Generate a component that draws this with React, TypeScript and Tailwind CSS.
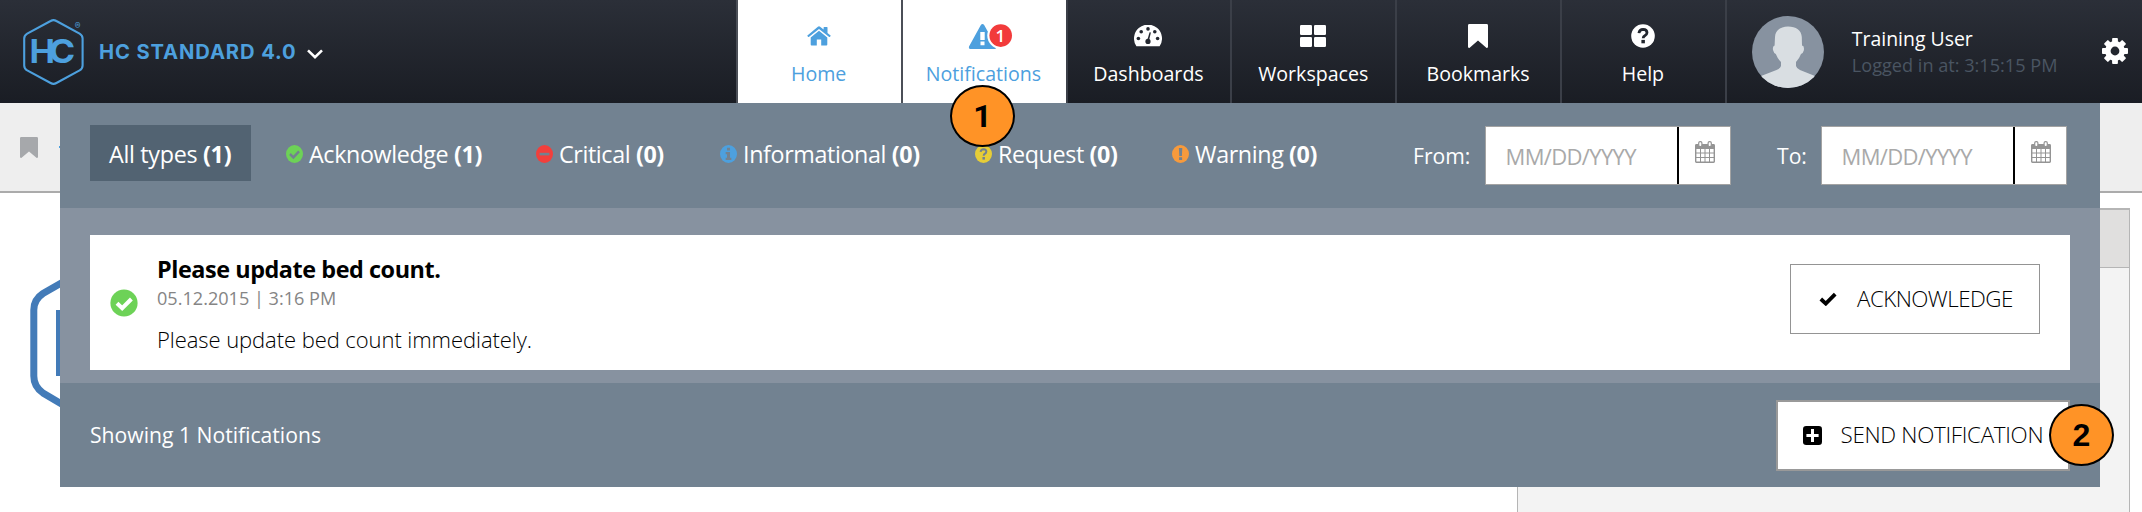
import type { ReactNode } from "react";

function HcLogo() {
  return (
    <svg width="64" height="70" viewBox="22 16 64 70" fill="#4da0de" aria-label="HC">
      <path
        d="M50.6 20 Q53.5 18.3 56.4 20 L79.6 32.6 Q82.6 34.4 82.6 37.6 V64.4 Q82.6 67.6 79.6 69.4 L56.4 82 Q53.5 83.7 50.6 82 L27.2 69.4 Q24.2 67.6 24.2 64.4 V37.6 Q24.2 34.4 27.2 32.6 Z"
        fill="none"
        stroke="#4da0de"
        strokeWidth="2.1"
      />
      <text x="29.4" y="62.4" fontFamily="Inter, sans-serif" fontWeight="750" fontSize="33" textLength="25.5" lengthAdjust="spacingAndGlyphs">H</text>
      <text x="48.8" y="62.4" fontFamily="Inter, sans-serif" fontWeight="750" fontSize="33" textLength="26.5" lengthAdjust="spacingAndGlyphs">C</text>
      <text x="74.8" y="28" fontFamily="Inter, sans-serif" fontSize="8.6">®</text>
    </svg>
  );
}

function HomeIcon() {
  return (
    <svg width="24" height="20" viewBox="0 0 24 20" fill="#4da0de">
      <path d="M12 4.8 L20.3 11.6 V18.5 a.9.9 0 0 1-.9.9 H14.2 V13.4 H9.8 V19.4 H4.6 a.9.9 0 0 1-.9-.9 V11.6 Z" />
      <path d="M10.9.8 a1.7 1.7 0 0 1 2.2 0 L16.6 3.6 V1.4 a.5.5 0 0 1 .5-.5 H20 a.5.5 0 0 1 .5.5 V6.9 L23.6 9.4 a.5.5 0 0 1 0 .6 l-.8.9 a.5.5 0 0 1-.6 0 L12 2.9 1.8 10.9 a.5.5 0 0 1-.6 0 L.4 10 a.5.5 0 0 1 0-.6 Z" />
    </svg>
  );
}

function AlertIcon() {
  return (
    <svg width="44" height="28" viewBox="969 21 44 28" className="translate-x-[7.5px]">
      <path
        fill="#4da0de"
        fillRule="evenodd"
        d="M981.2 24.2 Q983 21.6 984.8 24.2 L996.6 45.6 Q997.4 48 995 48 H971 Q968.7 48 969.5 45.6 Z M980.8 31 V39 H985.2 V31 Z M981 40.4 V44.2 H985 V40.4 Z"
      />
      <circle cx="1001.2" cy="34.6" r="13.4" fill="#fff" />
      <circle cx="1001.2" cy="34.6" r="11.3" fill="#f23b3b" />
      <text x="1000.9" y="41" textAnchor="middle" fontFamily="'Open Sans', sans-serif" fontWeight="600" fontSize="17" fill="#fff">1</text>
    </svg>
  );
}

function GaugeIcon() {
  return (
    <svg width="28" height="22" viewBox="0 0 28 22">
      <path fill="#fff" d="M2.4 21.3 A14 13.9 0 1 1 25.6 21.3 Z" />
      <g fill="#23272f">
        <circle cx="4.4" cy="13.5" r="1.8" />
        <circle cx="7.2" cy="6.8" r="1.8" />
        <circle cx="14" cy="3.9" r="1.8" />
        <circle cx="20.8" cy="6.8" r="1.8" />
        <circle cx="23.6" cy="13.5" r="1.8" />
        <circle cx="14" cy="16.4" r="2.6" />
        <path d="M13.3 15 L15.6 7.2 L16.9 7.6 L15 15.4 Z" />
      </g>
    </svg>
  );
}

function GridIcon() {
  return (
    <svg width="26" height="22" viewBox="0 0 26 22" fill="#fff">
      <rect width="12" height="10" rx="1.2" />
      <rect x="14" width="12" height="10" rx="1.2" />
      <rect y="12" width="12" height="10" rx="1.2" />
      <rect x="14" y="12" width="12" height="10" rx="1.2" />
    </svg>
  );
}

function BookmarkIcon({ width, height, color }: { width: number; height: number; color: string }) {
  return (
    <svg width={width} height={height} viewBox="0 0 20 24" preserveAspectRatio="none" fill={color}>
      <path d="M1.4 0 H18.6 Q20 0 20 1.4 V22.8 Q20 24 18.6 24 L10 16.6 L1.4 24 Q0 24 0 22.8 V1.4 Q0 0 1.4 0 Z" />
    </svg>
  );
}

function HelpIcon() {
  return (
    <svg width="24" height="24" viewBox="0 0 24 24">
      <circle cx="12" cy="12" r="11.8" fill="#fff" />
      <path d="M7.9 9.1 Q8.5 5.4 12.1 5.4 Q16 5.5 16 8.7 Q15.9 10.6 13.8 11.7 Q12.2 12.5 12.2 14.3" fill="none" stroke="#22262e" strokeWidth="2.8" />
      <rect x="10.4" y="15.9" width="3.5" height="3.4" fill="#22262e" />
    </svg>
  );
}

function GearIcon() {
  return (
    <svg width="26" height="26" viewBox="-13 -13 26 26" fill="#fff">
      {[0, 45, 90, 135].map((angle) => (
        <rect key={angle} x="-2.9" y="-13" width="5.8" height="26" rx="0.9" transform={`rotate(${angle})`} />
      ))}
      <circle r="9.9" />
      <circle r="4.4" fill="#22262e" />
    </svg>
  );
}

function Avatar() {
  return (
    <svg width="72" height="72" viewBox="0 0 72 72">
      <clipPath id="avatar-clip">
        <circle cx="36" cy="36" r="36" />
      </clipPath>
      <g clipPath="url(#avatar-clip)">
        <rect width="72" height="72" fill="#8792a0" />
        <path
          fill="#d9dee2"
          d="M36 10.5 C44 10.5 49.5 14.5 49.8 21 L50 29.4 Q52.6 29.6 51.8 34.5 Q51 37.6 49 38 Q47.4 42.5 44 46 V50 Q44.6 52.5 48 54 L63 60 V72 H9 V60 L24.5 54 Q28.4 52.4 29 50 V46 Q25.5 42.5 23.8 38 Q21.8 37.4 21 34 Q20.4 29.8 22.6 29.4 L23 21 C23.2 14.5 28.5 10.5 36 10.5 Z"
        />
      </g>
    </svg>
  );
}

function CalendarIcon() {
  return (
    <svg width="20" height="22" viewBox="0 0 20 22">
      <path fill="#949494" fillRule="evenodd" d="M1.4 3 H18.6 Q20 3 20 4.4 V20.6 Q20 22 18.6 22 H1.4 Q0 22 0 20.6 V4.4 Q0 3 1.4 3 Z M1.4 8 V20.6 H18.6 V8 Z" />
      <path stroke="#949494" strokeWidth="1" d="M5.5 8 V21 M10 8 V21 M14.5 8 V21 M1 12 H19 M1 16.5 H19" />
      <rect x="3.7" y="0.6" width="3.2" height="5" rx="1.4" fill="#fff" stroke="#949494" strokeWidth="1.2" />
      <rect x="13.1" y="0.6" width="3.2" height="5" rx="1.4" fill="#fff" stroke="#949494" strokeWidth="1.2" />
    </svg>
  );
}

function StatusIcon({ color, children }: { color: string; children: ReactNode }) {
  return (
    <svg width="17" height="18" viewBox="0 0 18 18" preserveAspectRatio="none" className="shrink-0">
      <circle cx="9" cy="9" r="9" fill={color} />
      {children}
    </svg>
  );
}

const slot = "#728291";
const filters: { label: string; count: string; icon: ReactNode }[] = [
  {
    label: "Acknowledge",
    count: "(1)",
    icon: (
      <StatusIcon color="#6dd257">
        <path d="M4.2 9 L7.8 12.4 L13.8 6.4" fill="none" stroke={slot} strokeWidth="2.6" />
      </StatusIcon>
    ),
  },
  {
    label: "Critical",
    count: "(0)",
    icon: (
      <StatusIcon color="#f23f3c">
        <rect x="3.8" y="7.8" width="10.4" height="2.6" fill={slot} />
      </StatusIcon>
    ),
  },
  {
    label: "Informational",
    count: "(0)",
    icon: (
      <StatusIcon color="#4da0de">
        <path d="M7.4 2.8 H10.6 V5.6 H7.4 Z M6 7 H10.6 V12.8 H12 V15 H6 V12.8 H7.4 V9.2 H6 Z" fill={slot} />
      </StatusIcon>
    ),
  },
  {
    label: "Request",
    count: "(0)",
    icon: (
      <StatusIcon color="#e6cd37">
        <path d="M5.9 6.9 Q6.3 4.2 9.1 4.2 Q12 4.3 12 6.6 Q11.9 8 10.4 8.8 Q9.2 9.4 9.2 10.8" fill="none" stroke={slot} strokeWidth="2.1" />
        <rect x="7.9" y="12" width="2.6" height="2.6" fill={slot} />
      </StatusIcon>
    ),
  },
  {
    label: "Warning",
    count: "(0)",
    icon: (
      <StatusIcon color="#f79a3c">
        <path d="M7.3 3 H10.9 L10.5 11 H7.7 Z M7.5 12.2 H10.7 V15 H7.5 Z" fill={slot} />
      </StatusIcon>
    ),
  },
];

const navItems: { label: string; icon: ReactNode; active?: boolean }[] = [
  { label: "Home", icon: <HomeIcon />, active: true },
  { label: "Notifications", icon: <AlertIcon />, active: true },
  { label: "Dashboards", icon: <GaugeIcon /> },
  { label: "Workspaces", icon: <GridIcon /> },
  { label: "Bookmarks", icon: <BookmarkIcon width={20} height={24} color="#fff" /> },
  { label: "Help", icon: <HelpIcon /> },
];

function Header() {
  return (
    <header className="flex h-[103px] shrink-0 bg-linear-to-b from-[#2b2f38] to-[#1a1d24]">
      <div className="flex w-[736px] items-center pl-[22px]">
        <HcLogo />
        <span className="ml-[13px] font-[Inter,sans-serif] text-[20.2px] leading-[28px] font-bold tracking-[0.88px] text-[#4da0de]">HC STANDARD 4.0</span>
        <svg width="18" height="12" viewBox="0 0 18 12" className="mt-[4px] ml-[9px]">
          <path d="M2 2.4 L9 9.2 L16 2.4" fill="none" stroke="#fff" strokeWidth="2.6" />
        </svg>
      </div>
      <nav className="flex">
        {navItems.map((item) => (
          <a
            key={item.label}
            className={
              item.active
                ? "flex w-[164.8px] flex-col items-center border-l-2 border-[#4b4f57] bg-white pt-[20px] pr-[1.5px] text-[#4da0de]"
                : "flex w-[164.8px] flex-col items-center border-l-2 border-[#3b3f48] pt-[20px] pr-[1px] text-white"
            }
          >
            <span className="flex h-[32px] items-center justify-center">{item.icon}</span>
            <span className="mt-[8px] text-[19.6px] leading-[28px]">{item.label}</span>
          </a>
        ))}
      </nav>
      <div className="flex flex-1 items-center border-l-2 border-[#3b3f48] pl-[25px]">
        <Avatar />
        <div className="ml-[28px] leading-[26px]">
          <div className="text-[19.46px] text-white">Training User</div>
          <div className="text-[18.14px] text-[#4a5562]">Logged in at: 3:15:15 PM</div>
        </div>
        <div className="mr-[14px] ml-auto pb-[2px]">
          <GearIcon />
        </div>
      </div>
    </header>
  );
}

function PageBody() {
  return (
    <main className="flex flex-1 flex-col">
      <div className="flex h-[90px] items-center border-b-2 border-[#ababab] bg-[#eee] pl-[20px]">
        <BookmarkIcon width={18} height={21} color="#a6a8ab" />
        <span className="ml-[21px] h-[2px] w-[12px] bg-[#4da0de]" />
      </div>
      <div className="flex flex-1 justify-between">
        <svg width="90" height="300" viewBox="0 193 90 300">
          <path d="M70 278 L43 293.5 Q33.8 299.5 33.8 310 V376 Q33.8 386.5 43 393 L70 409" fill="none" stroke="#437bb8" strokeWidth="7" />
          <rect x="56" y="310" width="12" height="66" fill="#437bb8" />
        </svg>
        <section className="mt-[15px] mr-[12px] flex w-[613px] flex-col border-x-[1.5px] border-t-2 border-[#b5b5b5] bg-[#f3f3f3]">
          <div className="h-[58px] border-b border-[#b5b5b5] bg-[#e0dfde]" />
        </section>
      </div>
    </main>
  );
}

function DateField() {
  return (
    <div className="flex h-[59px] w-[246px] border-[1.5px] border-[#a3a3a3] bg-white">
      <div className="flex-1 pt-[1px] pl-[19.5px] text-[22px] leading-[56px] tracking-[-0.64px] text-[#a9a9a9]">MM/DD/YYYY</div>
      <div className="flex w-[53px] justify-center border-l-2 border-black pt-[14px]">
        <CalendarIcon />
      </div>
    </div>
  );
}

function NotificationsPanel() {
  return (
    <section className="absolute top-[103px] left-[60px] flex h-[384px] w-[2040px] flex-col bg-[#8792a0]">
      <div className="grid h-[105px] grid-cols-[196px_250px_184px_255px_197px_241px_364px_auto] bg-[#728291] pt-[22px] pl-[30px] whitespace-nowrap text-white">
        <div className="h-[56px] w-[161px] bg-[#526372] pt-[1px] pl-[19px] text-[23.3px] leading-[56px] tracking-[-0.3px]">
          All types <b>(1)</b>
        </div>
        {filters.map((f) => (
          <div key={f.label} className="flex h-[58px] items-center gap-[6px]">
            {f.icon}
            <span className="text-[23.3px] tracking-[-0.38px]">
              {f.label} <b>{f.count}</b>
            </span>
          </div>
        ))}
        <div className="mt-[1px] flex h-[59px] items-center">
          <span className="w-[72px] text-[21.14px]">From:</span>
          <DateField />
        </div>
        <div className="mt-[1px] flex h-[59px] items-center">
          <span className="w-[44px] text-[21.14px]">To:</span>
          <DateField />
        </div>
      </div>
      <div className="h-[175px] px-[30px] pt-[27px]">
        <article className="flex h-[135px] items-center bg-white pl-[20px]">
          <svg width="28" height="28" viewBox="0 0 28 28">
            <circle cx="14" cy="14" r="13.6" fill="#6dd257" />
            <path d="M7 14.2 L12.2 19.2 L21.4 10" fill="none" stroke="#fff" strokeWidth="4" />
          </svg>
          <div className="ml-[19px]">
            <div className="text-[23.4px] leading-[32px] font-bold tracking-[-0.44px] text-black">Please update bed count.</div>
            <div className="text-[18.1px] leading-[26px] text-[#858585]">05.12.2015 | 3:16 PM</div>
            <div className="mt-[14px] text-[22px] leading-[28px] font-[350] tracking-[-0.07px] text-black">Please update bed count immediately.</div>
          </div>
          <button className="mt-[-7px] mr-[30px] ml-auto flex h-[70px] w-[250px] items-center border border-[#949494] pl-[28px] text-[22.4px] font-[350] tracking-[-0.55px] text-black">
            <svg width="18" height="14" viewBox="0 0 18 14">
              <path d="M1.8 7 L6.8 11.6 L16.2 2.2" fill="none" stroke="#000" strokeWidth="3.8" />
            </svg>
            <span className="ml-[20px]">ACKNOWLEDGE</span>
          </button>
        </article>
      </div>
      <div className="flex h-[104px] items-center justify-between bg-[#728291] px-[30px]">
        <span className="pb-[1px] text-[21.15px] text-white">Showing 1 Notifications</span>
        <button className="flex h-[71px] w-[294px] items-center border-2 border-[#999] bg-white pl-[25px] text-[22.4px] font-[350] tracking-[-0.3px] whitespace-nowrap text-black">
          <svg width="19" height="19" viewBox="0 0 19 19">
            <rect width="19" height="19" rx="3.2" fill="#000" />
            <path d="M9.5 3 V16 M3.4 9.5 H15.6" stroke="#fff" strokeWidth="3" />
          </svg>
          <span className="ml-[18.5px]">SEND NOTIFICATION</span>
        </button>
      </div>
    </section>
  );
}

function Callout({ label, place }: { label: string; place: string }) {
  return (
    <div className={`absolute h-[62px] w-[65px] rounded-[50%] border-2 border-black bg-[#ff9326] text-center text-[32px] leading-[58px] font-bold text-black ${place}`}>
      {label}
    </div>
  );
}

export default function App() {
  return (
    <div className="relative flex h-[512px] w-[2142px] flex-col overflow-hidden bg-white font-['Open_Sans','Noto_Sans',sans-serif]">
      <Header />
      <PageBody />
      <NotificationsPanel />
      <Callout label="1" place="top-[85px] left-[950px] font-[Roboto,Arial,sans-serif]" />
      <Callout label="2" place="top-[404px] left-[2049px] font-['Liberation_Sans',Arial,sans-serif]" />
    </div>
  );
}
